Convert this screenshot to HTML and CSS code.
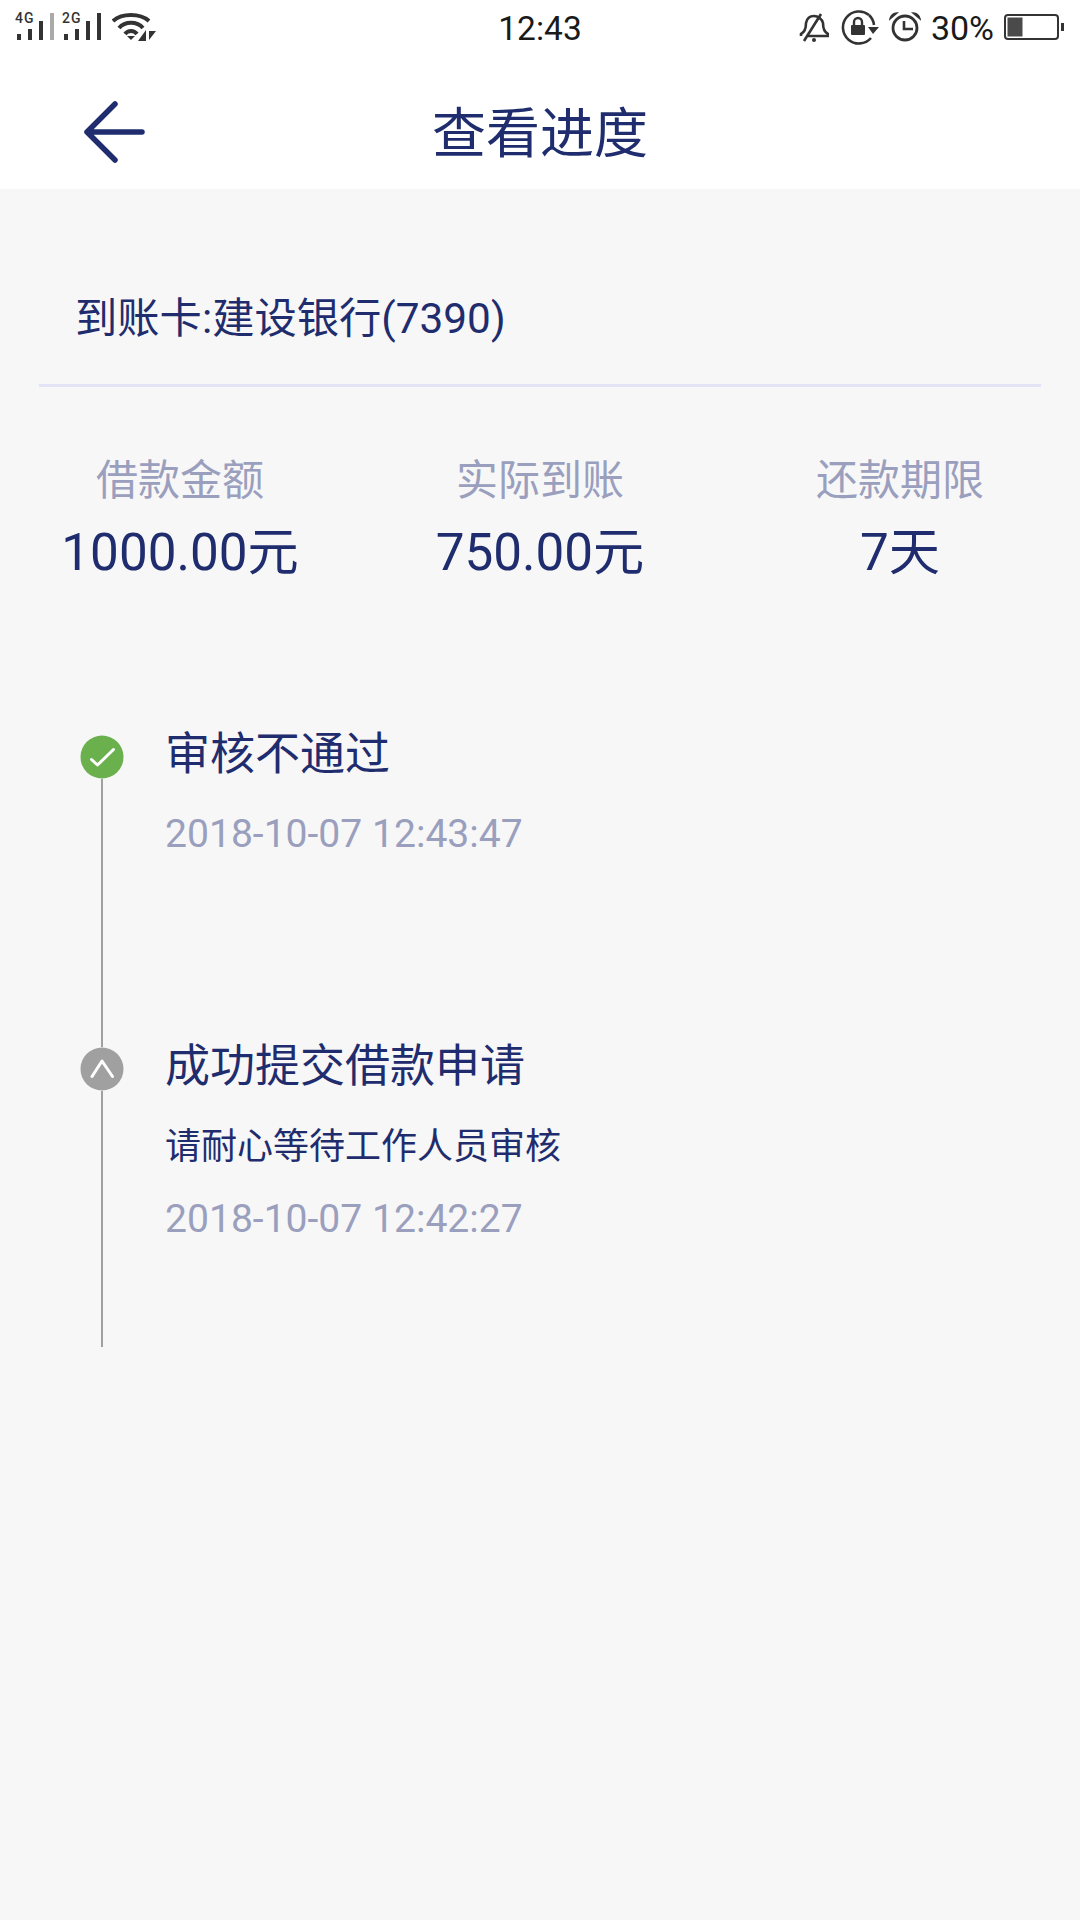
FILE: index.html
```html
<!DOCTYPE html>
<html lang="zh-CN">
<head>
<meta charset="utf-8">
<title>查看进度</title>
<link rel="stylesheet" href="styles.css">
</head>
<body>
<div class="status-bar">
    <div class="status-left">
        <svg width="44" height="42" viewBox="0 0 44 42">
            <rect x="5" y="34" width="4" height="6" fill="#333"/>
            <rect x="16" y="29" width="4" height="11" fill="#333"/>
            <rect x="27" y="21" width="4" height="19" fill="#333"/>
            <rect x="38" y="13" width="4" height="27" fill="#aaa"/>
            <text x="3" y="23" class="net-text">4G</text>
        </svg>
        <svg width="42" height="42" viewBox="0 0 42 42">
            <rect x="5" y="34" width="4" height="6" fill="#333"/>
            <rect x="16" y="29" width="4" height="11" fill="#333"/>
            <rect x="27" y="21" width="4" height="19" fill="#333"/>
            <rect x="38" y="13" width="4" height="27" fill="#333"/>
            <text x="3" y="23" class="net-text">2G</text>
        </svg>
        <svg class="wifi" width="46" height="28" viewBox="0 0 46 28">
            <path d="M1 8 C10 0 28 0 37 8" fill="none" stroke="#333" stroke-width="4"/>
            <path d="M7 15 C13 8 25 8 31 15" fill="none" stroke="#333" stroke-width="4"/>
            <path d="M13 21 C16 17 22 17 25 21" fill="none" stroke="#333" stroke-width="4"/>
            <path d="M15 23 L23 23 L19 27 Z" fill="#333"/>
            <path d="M34 17 L34 28 L26 28 Z" fill="#333"/>
            <path d="M37 18 L44 18 L37 27 Z" fill="#333"/>
        </svg>
    </div>
    <div class="status-time">12:43</div>
    <div class="status-right">
        <svg class="bell" width="30" height="34" viewBox="0 0 30 34">
            <path d="M2 25 L2 23 C6 21 7 16 7 12 C8 7 11 5 15 5 C19 5 23 8 24 12 C24 17 25 21 29 23 L29 25 L9 25" fill="none" stroke="#333" stroke-width="2.6"/>
            <path d="M22 3 L5 30" stroke="#333" stroke-width="2.6"/>
            <circle cx="15" cy="29" r="2" fill="#333"/>
        </svg>
        <svg width="38" height="36" viewBox="0 0 38 36">
            <path d="M28 5 A16 16 0 1 0 30 28" fill="none" stroke="#333" stroke-width="2.6"/>
            <path d="M28 5 A16 16 0 0 1 33 15" fill="none" stroke="#333" stroke-width="2.6"/>
            <path d="M27 17 L38 17 L32 24 Z" fill="#333"/>
            <rect x="10" y="15" width="14" height="10" rx="1" fill="#333"/>
            <path d="M13 15 L13 12 A4 4 0 0 1 21 12 L21 15" fill="none" stroke="#333" stroke-width="2.4"/>
        </svg>
        <svg width="32" height="34" viewBox="0 0 32 34">
            <circle cx="16" cy="17" r="12" fill="none" stroke="#333" stroke-width="2.8"/>
            <path d="M15 10 L15 18 L24 18" fill="none" stroke="#333" stroke-width="2.6"/>
            <path d="M1 8 C2 4 4 2 8 2 Z" fill="#333" stroke="#333" stroke-width="1.5"/>
            <path d="M31 8 C30 4 28 2 24 2 Z" fill="#333" stroke="#333" stroke-width="1.5"/>
        </svg>
        <span class="battery-pct">30%</span>
        <svg width="60" height="28" viewBox="0 0 60 28">
            <rect x="1" y="1" width="53" height="24" rx="3" fill="none" stroke="#333" stroke-width="2"/>
            <rect x="3.5" y="3.5" width="15" height="19" fill="#4a4a4a"/>
            <rect x="57" y="9" width="3" height="8" fill="#333"/>
        </svg>
    </div>
</div>

<div class="title-bar">
    <svg class="back" width="64" height="64" viewBox="0 0 64 64">
        <path d="M33 4 L5 32 L33 60 M5 32 L60 32" fill="none" stroke="#1f2d6e" stroke-width="5.5" stroke-linecap="round" stroke-linejoin="round"/>
    </svg>
    <h1>查看进度</h1>
</div>

<div class="card-row">到账卡:建设银行(7390)</div>

<div class="summary">
    <div class="summary-item">
        <div class="summary-label">借款金额</div>
        <div class="summary-value">1000.00元</div>
    </div>
    <div class="summary-item">
        <div class="summary-label">实际到账</div>
        <div class="summary-value">750.00元</div>
    </div>
    <div class="summary-item">
        <div class="summary-label">还款期限</div>
        <div class="summary-value">7天</div>
    </div>
</div>

<div class="timeline">
    <div class="step step-first">
        <div class="rail">
            <svg class="dot" width="44" height="44" viewBox="0 0 44 44">
                <circle cx="22" cy="22" r="21.5" fill="#6ab04c"/>
                <path d="M11.5 24.5 L17.5 30 L33.5 14.5" fill="none" stroke="#fff" stroke-width="3" stroke-linecap="round" stroke-linejoin="round"/>
            </svg>
            <div class="rail-line"></div>
        </div>
        <div class="step-body">
            <div class="step-title">审核不通过</div>
            <div class="step-date">2018-10-07 12:43:47</div>
        </div>
    </div>
    <div class="step step-last">
        <div class="rail">
            <svg class="dot" width="44" height="44" viewBox="0 0 44 44">
                <circle cx="22" cy="22" r="21.5" fill="#a0a0a0"/>
                <path d="M12 29.5 L22 14 L32.5 29.5" fill="none" stroke="#fff" stroke-width="3" stroke-linecap="round" stroke-linejoin="round"/>
            </svg>
            <div class="rail-line"></div>
        </div>
        <div class="step-body">
            <div class="step-title">成功提交借款申请</div>
            <div class="step-note">请耐心等待工作人员审核</div>
            <div class="step-date">2018-10-07 12:42:27</div>
        </div>
    </div>
</div>
</body>
</html>
```

FILE: styles.css
```css
html, body {
  margin: 0;
  padding: 0;
}

body {
  width: 1080px;
  height: 1920px;
  overflow: hidden;
  background-color: #f7f7f7;
  color: #1f2d6e;
  font-family: Roboto, "Noto Sans CJK SC", sans-serif;
}

.status-bar {
  height: 56px;
  box-sizing: border-box;
  background-color: #fff;
  display: grid;
  grid-template-columns: 1fr auto 1fr;
  align-items: center;
  padding: 0 16px;
}

.status-left {
  display: flex;
  align-items: flex-start;
  align-self: start;
  gap: 3px;
  margin-left: -4px;
}

.net-text {
  font-family: Roboto, sans-serif;
  font-size: 14px;
  font-weight: 500;
  letter-spacing: 1px;
  fill: #333;
}

.wifi {
  margin-left: 8px;
  margin-top: 13px;
}

.status-time {
  font-size: 33.5px;
  color: #1a1a1a;
}

.status-right {
  display: flex;
  align-items: center;
  justify-content: flex-end;
  gap: 10px;
}

.bell {
  margin-right: 2px;
}

.battery-pct {
  font-size: 34px;
  color: #1a1a1a;
}

.title-bar {
  height: 133px;
  box-sizing: border-box;
  padding-top: 19px;
  background-color: #fff;
  display: grid;
  grid-template-columns: 1fr auto 1fr;
  align-items: center;
}

.back {
  margin-left: 82px;
}

h1 {
  margin: 0 0 6px;
  font-size: 54px;
  font-weight: 400;
}

.card-row {
  margin: 0 39px;
  padding: 0 36px;
  height: 198px;
  line-height: 260px;
  box-sizing: border-box;
  font-size: 42.3px;
  border-bottom: 3px solid #e3e3f6;
}

.summary {
  display: grid;
  grid-template-columns: repeat(3, 360px);
  padding-top: 65px;
}

.summary-item {
  text-align: center;
}

.summary-label {
  font-size: 42px;
  line-height: 58px;
  color: #9a9fbe;
}

.summary-value {
  font-size: 51.2px;
  line-height: 72px;
  margin-top: 7px;
}

.timeline {
  margin-top: 146px;
  padding-left: 80px;
}

.step {
  display: flex;
}

.step-first {
  height: 312px;
}

.step-last {
  height: 300px;
}

.rail {
  width: 44px;
  display: flex;
  flex-direction: column;
  align-items: center;
}

.dot {
  flex: none;
}

.rail-line {
  flex: 1;
  width: 2px;
  background-color: #a0a0a0;
}

.step-body {
  margin-left: 41px;
}

.step-title {
  font-size: 45px;
  line-height: 60px;
  margin-top: -10px;
}

.step-note {
  font-size: 36px;
  line-height: 50px;
  margin-top: 25px;
}

.step-date {
  font-size: 39.1px;
  line-height: 50px;
  margin-top: 24px;
  color: #9a9fbe;
}

.step-note + .step-date {
  margin-top: 22px;
}
```
